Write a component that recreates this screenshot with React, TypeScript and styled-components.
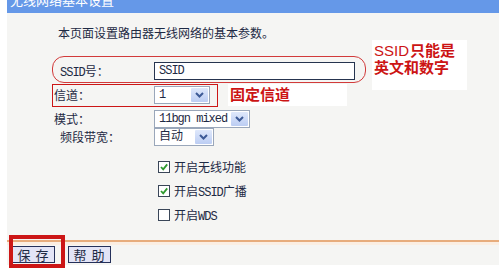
import React from 'react';
import styled, { createGlobalStyle } from 'styled-components';

const Global = createGlobalStyle`
  html, body {
    margin: 0;
    padding: 0;
    background: #ffffff;
  }
  body {
    font-family: 'Liberation Mono', 'Noto Sans CJK SC', monospace;
    font-size: 12px;
    color: #1e2a44;
  }
`;

const Page = styled.div`
  position: relative;
  width: 499px;
  height: 277px;
  overflow: hidden;
  background: #ffffff;
`;

const Panel = styled.div`
  margin-left: 7px;
  height: 265px;
  background: #f5f5f3;
  display: flex;
  flex-direction: column;
`;

const TitleBar = styled.div`
  height: 13px;
  background: #6598e8;
  overflow: hidden;
  padding-left: 3px;
`;

const TitleText = styled.div`
  margin-top: -7px;
  font-family: 'Noto Sans CJK SC', sans-serif;
  font-size: 13px;
  line-height: 14px;
  color: #ffffff;
`;

const Body = styled.div`
  flex: 1;
  display: flex;
  flex-direction: column;
`;

const Intro = styled.div`
  margin: 14px 0 0 51px;
  line-height: 12px;
  font-family: 'Noto Sans CJK SC', sans-serif;
`;

const Form = styled.div`
  display: flex;
  flex-direction: column;
  padding-left: 47px;
`;

const Row = styled.div<{ $top: number; $h?: number }>`
  display: flex;
  align-items: center;
  margin-top: ${(p) => p.$top}px;
  height: ${(p) => p.$h ?? 19}px;
`;

const Label = styled.div<{ $indent?: number }>`
  width: 100px;
  padding-left: ${(p) => p.$indent ?? 0}px;
  box-sizing: border-box;
  white-space: nowrap;
`;

/* narrow ascii, like the old bitmap song font */
const Ascii = styled.span`
  font-family: 'Liberation Mono', monospace;
  letter-spacing: -1px;
`;

const TextInput = styled.div`
  width: 201px;
  height: 18px;
  box-sizing: border-box;
  border: 1px solid #26344f;
  background: #ffffff;
  padding: 0 4px;
  line-height: 16px;
`;

const SelectBox = styled.div<{ $w: number }>`
  width: ${(p) => p.$w}px;
  height: 18px;
  box-sizing: border-box;
  border: 1px solid #9aa7ba;
  background: #ffffff;
  display: flex;
  align-items: stretch;
`;

const SelectValue = styled.div`
  flex: 1;
  padding-left: 4px;
  line-height: 16px;
  white-space: nowrap;
  overflow: hidden;
`;

const SelectArrow = styled.div`
  width: 17px;
  margin: 1px;
  background: linear-gradient(180deg, #dfe8fb 0%, #bccdf3 100%);
  border-radius: 1px;
  display: flex;
  align-items: center;
  justify-content: center;
`;

const CheckLine = styled.div<{ $top: number }>`
  display: flex;
  align-items: center;
  gap: 4px;
  margin: ${(p) => p.$top}px 0 0 104px;
  height: 18px;
`;

const Box = styled.div`
  width: 12px;
  height: 12px;
  box-sizing: border-box;
  border: 1px solid #3a4658;
  background: #ffffff;
  display: flex;
  align-items: center;
  justify-content: center;
`;

const Divider = styled.div`
  margin-top: 16px;
  height: 0;
  border-top: 2px solid #e7ac7c;
  border-bottom: 3px solid #fbeee2;
`;

const ButtonBar = styled.div`
  display: flex;
  gap: 13px;
  padding: 1px 0 0 5px;
`;

const Button = styled.div`
  width: 43px;
  height: 17px;
  box-sizing: border-box;
  border: 1px solid #25305a;
  background: #e3e4f6;
  font-family: 'Noto Sans CJK SC', sans-serif;
  font-size: 13px;
  line-height: 15px;
  text-align: center;
  letter-spacing: 1px;
`;

const RoundFrame = styled.div`
  position: absolute;
  left: 52px;
  top: 56px;
  width: 314px;
  height: 27px;
  box-sizing: border-box;
  border: 1px solid #d23a3a;
  border-radius: 12px;
`;

const RectFrame = styled.div<{ $l: number; $t: number; $w: number; $h: number; $b: number }>`
  position: absolute;
  left: ${(p) => p.$l}px;
  top: ${(p) => p.$t}px;
  width: ${(p) => p.$w}px;
  height: ${(p) => p.$h}px;
  box-sizing: border-box;
  border: ${(p) => p.$b}px solid #cc1616;
`;

const Note = styled.div<{ $l: number; $t: number; $w: number; $h: number }>`
  position: absolute;
  left: ${(p) => p.$l}px;
  top: ${(p) => p.$t}px;
  width: ${(p) => p.$w}px;
  height: ${(p) => p.$h}px;
  background: #ffffff;
  padding: 2px 0 0 2px;
  box-sizing: border-box;
  color: #cc1414;
  font-family: 'Noto Sans CJK SC', sans-serif;
  font-weight: 700;
  font-size: 15px;
  line-height: 16px;
  white-space: nowrap;
`;

const Thin = styled.span`
  font-family: 'Liberation Sans', sans-serif;
  font-weight: 400;
  margin-right: 1px;
`;

const Chevron = () => (
  <svg width="9" height="6" viewBox="0 0 9 6">
    <path d="M1 1 L4.5 4.5 L8 1" fill="none" stroke="#3d5a96" strokeWidth="2" />
  </svg>
);

const Tick = () => (
  <svg width="10" height="10" viewBox="0 0 10 10">
    <path d="M2 5 L4.2 7.4 L8.2 2.4" fill="none" stroke="#2f9a2f" strokeWidth="1.8" />
  </svg>
);

const Select: React.FC<{ width: number; children: React.ReactNode }> = ({ width, children }) => (
  <SelectBox $w={width}>
    <SelectValue>{children}</SelectValue>
    <SelectArrow>
      <Chevron />
    </SelectArrow>
  </SelectBox>
);

const Check: React.FC<{ top: number; checked: boolean; children: React.ReactNode }> = ({
  top,
  checked,
  children,
}) => (
  <CheckLine $top={top}>
    <Box>{checked && <Tick />}</Box>
    <span>{children}</span>
  </CheckLine>
);

export default function App() {
  return (
    <>
      <Global />
      <Page>
        <Panel>
          <TitleBar>
            <TitleText>无线网络基本设置</TitleText>
          </TitleBar>
          <Body>
            <Intro>本页面设置路由器无线网络的基本参数。</Intro>
            <Form>
              <Row $top={22}>
                <Label $indent={6}>
                  <Ascii>SSID</Ascii>号：
                </Label>
                <TextInput>
                  <Ascii>SSID</Ascii>
                </TextInput>
              </Row>
              <Row $top={5}>
                <Label>信道：</Label>
                <Select width={56}>
                  <Ascii>1</Ascii>
                </Select>
              </Row>
              <Row $top={5}>
                <Label>模式：</Label>
                <Select width={96}>
                  <Ascii>11bgn mixed</Ascii>
                </Select>
              </Row>
              <Row $top={0} $h={18}>
                <Label $indent={6}>频段带宽：</Label>
                <Select width={60}>自动</Select>
              </Row>
              <Check top={12} checked>
                开启无线功能
              </Check>
              <Check top={6} checked>
                开启<Ascii>SSID</Ascii>广播
              </Check>
              <Check top={6} checked={false}>
                开启<Ascii>WDS</Ascii>
              </Check>
            </Form>
            <Divider />
            <ButtonBar>
              <Button>保 存</Button>
              <Button>帮 助</Button>
            </ButtonBar>
          </Body>
        </Panel>

        <RoundFrame />
        <RectFrame $l={52} $t={84} $w={166} $h={23} $b={1} />
        <Note $l={228} $t={84} $w={119} $h={22}>
          固定信道
        </Note>
        <Note $l={372} $t={40} $w={95} $h={50}>
          <Thin>SSID</Thin>只能是
          <br />
          英文和数字
        </Note>
        <RectFrame $l={9} $t={235} $w={56} $h={33} $b={4} />
      </Page>
    </>
  );
}
